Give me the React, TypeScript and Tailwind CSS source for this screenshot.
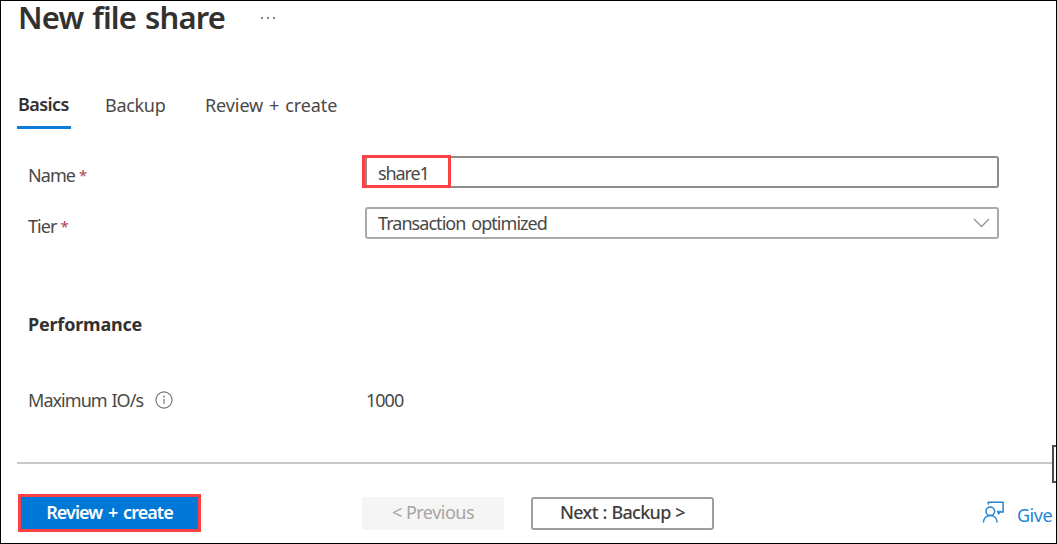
import type { ReactNode } from "react";

function Label({ children }: { children: ReactNode }) {
  return (
    <div className="flex h-6 w-[337px] items-center whitespace-pre text-[18px] tracking-[-0.95px] text-[#4a4846] [word-spacing:1px]">
      {children}
    </div>
  );
}

function Required() {
  return <span className="ml-[4px] text-[15px] leading-6 text-[#b0404a]">*</span>;
}

function InfoIcon() {
  return (
    <svg className="ml-[12px] h-[18px] w-[18px]" viewBox="0 0 18 18" fill="none">
      <circle cx="9" cy="9" r="8.1" stroke="#75736f" strokeWidth="1.1" />
      <path d="M9 7.8v5" stroke="#6d8290" strokeWidth="1.3" />
      <circle cx="9" cy="5.5" r="0.9" fill="#6d8290" />
    </svg>
  );
}

function FeedbackIcon() {
  return (
    <svg className="h-[22px] w-[23px]" viewBox="0 0 23 22" fill="none" stroke="#2484d0" strokeWidth="1.5">
      <path d="M6.3 3.5V1.2h14.8v9.8h-2.3" />
      <path d="M15 10.2l1.6 3.2 2.8-3z" fill="#2484d0" strokeWidth="0.8" />
      <circle cx="8.3" cy="10.3" r="4.3" />
      <path d="M1.4 21.5c.2-4.3 3-7 6.9-7s6.6 2.9 6.9 7" />
    </svg>
  );
}

export default function App() {
  return (
    <div className="relative flex h-[544px] w-[1057px] flex-col overflow-hidden border border-black bg-white font-['Noto_Sans','Open_Sans',sans-serif] text-[#323130]">
      <header className="flex h-[36px] shrink-0 items-start pl-[17px]">
        <h1 className="h-[32px] w-[241px] whitespace-nowrap text-[31px] font-semibold leading-[32px] tracking-[-0.8px] [word-spacing:1.5px]">
          New file share
        </h1>
        <svg className="mt-[15px] h-[4px] w-[18px]" viewBox="0 0 18 4" fill="#55534f">
          <circle cx="3" cy="2" r="0.95" />
          <circle cx="9" cy="2" r="0.95" />
          <circle cx="15" cy="2" r="0.95" />
        </svg>
      </header>

      <nav className="mt-[55px] flex h-[37px] shrink-0 items-start whitespace-nowrap pl-4 text-[18px] leading-6 text-[#4a4846]">
        <div className="h-[37px] w-[54px] border-b-[3px] border-[#0f7bd8] pl-[1px] font-semibold tracking-[-0.6px] text-[#323130]">
          Basics
        </div>
        <div className="ml-[34px] mt-[1px] w-[100px] tracking-[-0.3px]">Backup</div>
        <div className="mt-[1px] tracking-[-0.1px] [word-spacing:1.4px]">Review + create</div>
      </nav>

      <main className="flex flex-col pl-[27px]">
        <div className="mt-[27px] flex h-[33px] shrink-0">
          <div className="mt-[7px]">
            <Label>
              Name
              <Required />
            </Label>
          </div>
          <div className="relative h-[32px] w-[634px] rounded-[3px] border-2 border-[#8f8b88] pl-[11px] text-[18px] leading-7 tracking-[-1.1px] text-[#4a4846]">
            <span className="relative top-[1px]">share1</span>
            <div className="absolute -left-[5px] -top-[3px] h-[33px] w-[89px] border-[3px] border-[#fb4143]" />
          </div>
        </div>

        <div className="mt-[18px] flex h-[32px] shrink-0">
          <div className="mt-[7px]">
            <Label>
              Tier
              <Required />
            </Label>
          </div>
          <div className="flex h-[32px] w-[634px] items-center justify-between rounded-[3px] border-2 border-[#acaaa6] pl-[11px] pr-[7px] text-[18px] tracking-[-0.95px] text-[#4a4846] [word-spacing:2px]">
            Transaction optimized
            <svg className="h-[10px] w-[17px]" viewBox="0 0 17 10" fill="none">
              <path d="M1 1l7.5 7.5L16 1" stroke="#92908d" strokeWidth="1.3" />
            </svg>
          </div>
        </div>

        <h2 className="mt-[73px] h-6 text-[18px] font-bold leading-6 tracking-[-0.2px]">Performance</h2>

        <div className="mt-[52px] flex h-6">
          <Label>
            Maximum IO/s
            <InfoIcon />
          </Label>
          <span className="ml-[1px] text-[18px] leading-6 tracking-[-1px] text-[#4a4846]">1000</span>
        </div>
      </main>

      <footer className="mt-[50px] flex flex-col pl-4">
        <div className="flex h-[2px] w-[1036px] bg-[#c9c8c7]" />
        <div className="mt-[30px] flex h-[38px] items-center whitespace-nowrap text-[18px]">
          <button className="ml-[1px] h-[38px] w-[183px] border-[3px] border-[#fb4143] bg-[#0078d7] pb-[2px] font-semibold tracking-[-0.95px] text-white [word-spacing:2px]">
            Review + create
          </button>
          <button className="ml-[161px] h-[33px] w-[142px] rounded-[2px] bg-[#f5f5f5] pb-[2px] tracking-[-0.5px] text-[#a6a4a2]">
            &lt; Previous
          </button>
          <button className="ml-[27px] h-[33px] w-[183px] rounded-[3px] border-2 border-[#a09e99] pb-[2px] font-medium tracking-[-0.7px] text-[#403e3c] [word-spacing:0.7px]">
            Next : Backup &gt;
          </button>
          <div className="ml-[268px] flex items-center pb-[2px] text-[#2484d0]">
            <FeedbackIcon />
            <span className="ml-[12px] mt-[6px] tracking-[-0.5px]">Give</span>
          </div>
        </div>
      </footer>

      <div className="absolute left-[1051px] top-[444px] h-[38px] w-[12px] border-2 border-[#4d4d4d] bg-white" />
    </div>
  );
}
